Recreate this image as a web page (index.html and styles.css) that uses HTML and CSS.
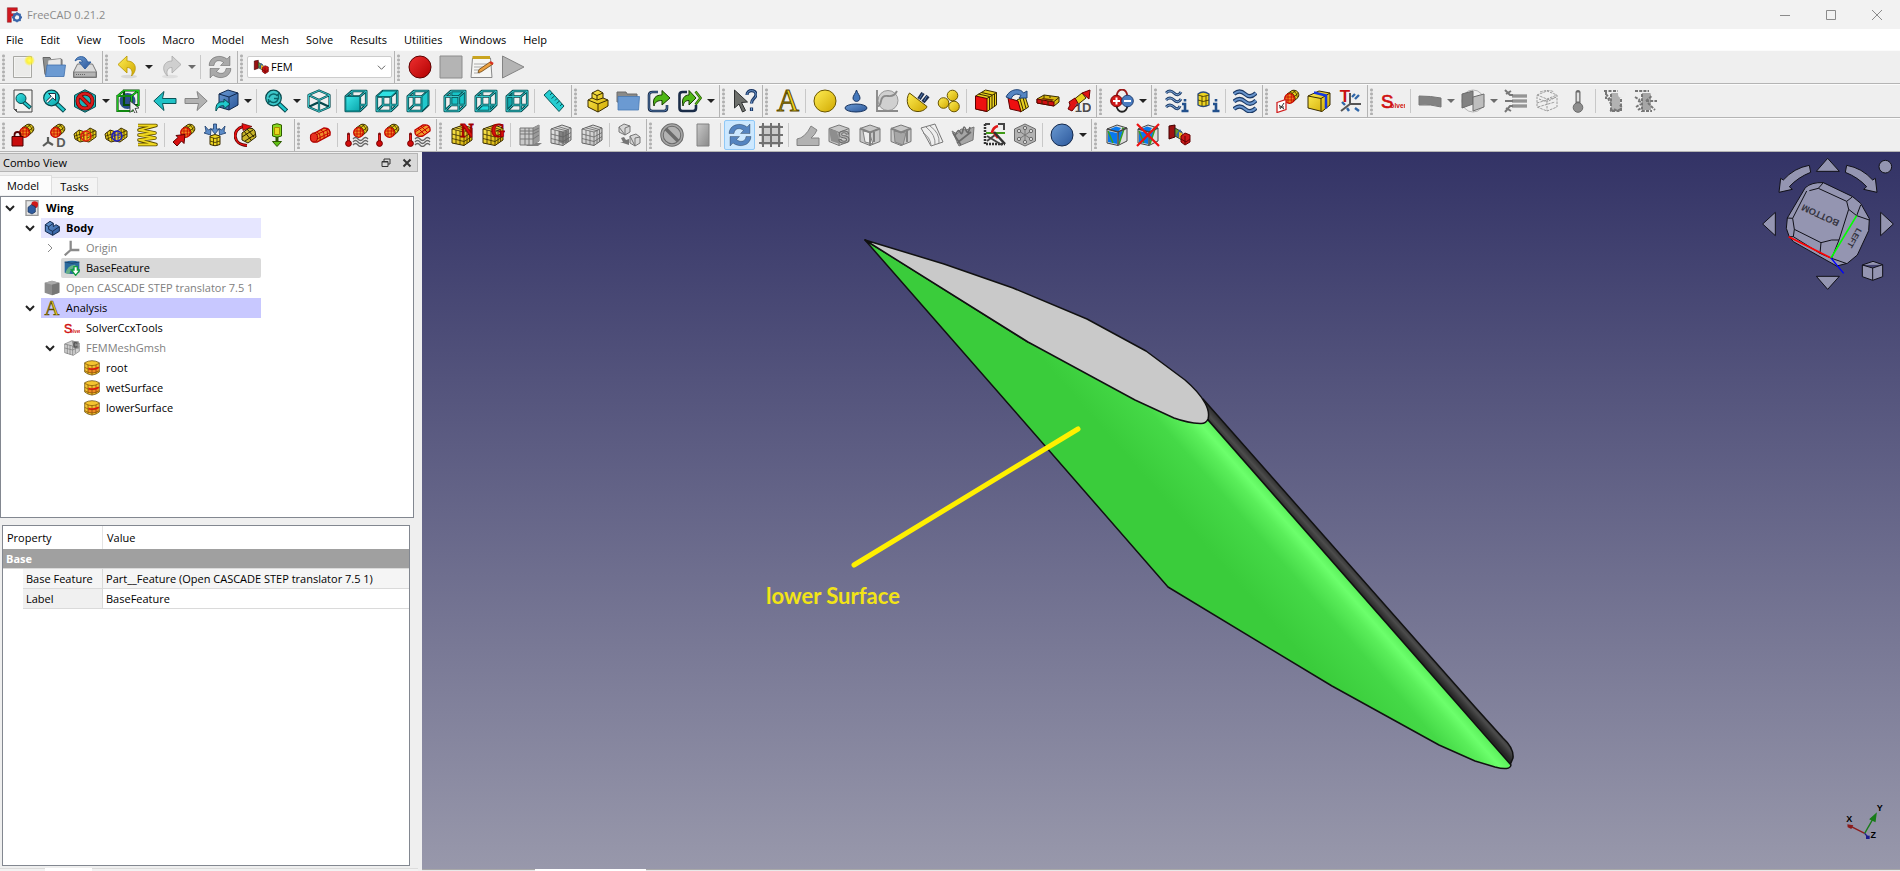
FILE: index.html
```html
<!DOCTYPE html>
<html lang="en">
<head>
<meta charset="utf-8">
<title>FreeCAD 0.21.2</title>
<link rel="stylesheet" href="styles.css">
</head>
<body>
<svg class="defs" aria-hidden="true">
<defs>
<linearGradient id="gy" x1="0" y1="0" x2="1" y2="1"><stop offset="0" stop-color="#ffee55"/><stop offset="1" stop-color="#d0a800"/></linearGradient>
<linearGradient id="gb" x1="0" y1="0" x2="1" y2="1"><stop offset="0" stop-color="#6a9ad2"/><stop offset="1" stop-color="#2b579b"/></linearGradient>
<linearGradient id="gg" x1="0" y1="0" x2="1" y2="1"><stop offset="0" stop-color="#b8b8b8"/><stop offset="1" stop-color="#606060"/></linearGradient>
<linearGradient id="gr" x1="0" y1="0" x2="1" y2="1"><stop offset="0" stop-color="#f03030"/><stop offset="1" stop-color="#b00000"/></linearGradient>
<linearGradient id="gt" x1="0" y1="0" x2="1" y2="1"><stop offset="0" stop-color="#3ce6e8"/><stop offset="1" stop-color="#0aa5aa"/></linearGradient>
<radialGradient id="glow"><stop offset="0" stop-color="#ffff60"/><stop offset=".5" stop-color="#fff02a" stop-opacity=".9"/><stop offset="1" stop-color="#fff200" stop-opacity="0"/></radialGradient>

<g id="wire" fill="none" stroke-linejoin="round">
  <path d="M1.800 7.500h14v14.500h-14zM8 2h14.200v14h-14.200zM1.800 7.500L8 2M15.800 7.500L22.200 2M15.800 22L22.200 16M1.800 22L8 16" stroke="#06484c" stroke-width="2.600"/>
  <path d="M1.800 7.500h14v14.500h-14zM8 2h14.200v14h-14.200zM1.800 7.500L8 2M15.800 7.500L22.200 2M15.800 22L22.200 16M1.800 22L8 16" stroke="#35c8cb" stroke-width="1"/>
</g>
<g id="tube">
  <path d="M11 5L16 1.500C21 0 24.500 5 22 8.500L17 13z" fill="#e8ce1c" stroke="#3a2c00"/>
  <path d="M14 3q5 2 5.500 8M17 1.500q4 2 4.500 7M13 6.500l7-5M16 9.500l6.500-5.500" fill="none" stroke="#3a2c00" stroke-width=".8"/>
  <circle cx="13.500" cy="9.500" r="4.800" fill="#f08a20" stroke="#c80000" stroke-width="1.300"/>
  <path d="M12 5v9M15.300 5v9M9 8h9M9 11h9" stroke="#c80000" stroke-width=".8"/>
</g>
<g id="box">
  <path d="M2 6L13 2l9 3v12l-8 5.500L2 20z" fill="url(#gy)" stroke="#3a2c00"/>
  <path d="M2 6l12 3 8-4M14 9v13.500M2 11l12 3 8-4.500M2 15.500l12 3 8-5M6 7v14M10 8v13.500M17 7.500v13M19.500 6.500v12.500M5.500 4.800l12 3M9 3.500l10 3" fill="none" stroke="#3a2c00" stroke-width=".8"/>
</g>
<g id="cube">
  <path d="M2 5.500L12 2l10 3.500v13L12 22.500 2 18.500z" fill="#b8b8b8" stroke="#444"/>
  <path d="M2 5.500l10 4 10-4M12 9.500v13" fill="none" stroke="#444"/>
</g>
<g id="thermo"><path d="M3.500 11v8" stroke="#801010" stroke-width="3" stroke-linecap="round"/><path d="M3.500 12v7" stroke="#f02020" stroke-width="1.400"/><circle cx="3.500" cy="20.500" r="2.900" fill="#d00c0c" stroke="#700"/></g>
<g id="waves" fill="none" stroke="#666" stroke-width="1.300"><path d="M8 16q2.500-3 5 0t5 0 5 0M8 19q2.500-3 5 0t5 0 5 0M8 22q2.500-3 5 0t5 0 5 0"/></g>
<g id="clip">
  <path d="M2 6L12 2l10 3v13l-9 4.500L2 20z" fill="#ddd" stroke="#444"/>
  <path d="M4 6.500l7-3 5 1.500-3 4zM3 8l9 2v11l-9-2z" fill="#0878ee"/>
  <path d="M13 9.500l5-2-4 13z" fill="#0878ee"/>
  <path d="M3 8l5 12M17 5l2 1-5 15" fill="none" stroke="#38a020" stroke-width="1.500"/>
  <path d="M2 6l11 3 9-4M13 9v13" fill="none" stroke="#444" stroke-width="1.500"/>
</g>
<g id="fem">
  <path d="M2 3l6-1v12l-6 2z" fill="#9c1212" stroke="#400"/><path d="M8 5l7 4v8l-7-4z" fill="#6a9e2c" stroke="#333"/><path d="M9 12l4-6 2 4-3 5z" fill="#3465a4"/><path d="M12 9l3 1v6l-3-1z" fill="#e8b820"/><path d="M14 13l4-3 5 2v7l-5 3-4-3z" fill="#cc1818" stroke="#600"/><path d="M14 16l5 3 4-3M18 13v8" fill="none" stroke="#600"/>
</g>

<symbol id="i-logo" viewBox="0 0 24 24"><path d="M2 1h15v5H8v4h6v4H8v9H2z" fill="#d01820" stroke="#70060a" stroke-width=".6"/><circle cx="16.500" cy="15.500" r="5" fill="none" stroke="#3a66aa" stroke-width="3.400"/><path d="M16.500 8v3M16.500 20v3M9 15.500h3M21 15.500h3M11.200 10.200l2 2M19.800 18.800l2 2M21.800 10.200l-2 2M13.200 18.800l-2 2" stroke="#3a66aa" stroke-width="2.400"/></symbol>
<symbol id="i-new" viewBox="0 0 24 24"><path d="M2.500 1.500h18v21h-18z" fill="#f4f4f2" stroke="#a8a8a4"/><path d="M4 3h15v18H4z" fill="#ebebe9"/><circle cx="18.500" cy="5.500" r="5.500" fill="url(#glow)"/></symbol>
<symbol id="i-open" viewBox="0 0 24 24"><path d="M1 2.500h7l1 2h11v15H3z" fill="#8e9090" stroke="#666"/><path d="M6 5l13-1.500V14H5z" fill="#e8e8e8" stroke="#888" stroke-width=".8"/><path d="M5 10h18.500L22 21.500H3.500z" fill="#6b9ad2" stroke="#4070ac" stroke-width=".8"/></symbol>
<symbol id="i-save" viewBox="0 0 24 24"><path d="M4.500 9h15l4 8v5.500H.5V17z" fill="#dadada" stroke="#777"/><path d="M1 17h22v5H1z" fill="#b4b4b4" stroke="#777" stroke-width=".8"/><path d="M3 19.500h9" stroke="#666" stroke-dasharray="1 1"/><path d="M2 6C4 0 13 0 14.500 7H18l-6 7-6-7h3.500C9 4 5 3.500 2 6z" fill="url(#gb)" stroke="#31609f"/></symbol>
<symbol id="i-undo" viewBox="0 0 24 24"><ellipse cx="13" cy="21.500" rx="8" ry="1.800" fill="#d8d8d8"/><path d="M2 9.500L11 1v5c9 0 11 9 4.500 15 1.500-5 0-8.500-4.500-8.500V18z" fill="url(#gy)" stroke="#b89400" stroke-width=".8"/></symbol>
<symbol id="i-redo" viewBox="0 0 24 24"><ellipse cx="11" cy="21.500" rx="8" ry="1.800" fill="#dedede"/><path d="M22 9.500L13 1v5C4 6 2 15 8.500 21 7 16 8.500 12.500 13 12.500V18z" fill="#cfcfcf" stroke="#a8a8a8" stroke-width=".8"/></symbol>
<symbol id="i-sync" viewBox="0 0 24 24"><path d="M1 10.500C1.500 1 13 -1 19 4l3-3v9.500h-9.500l3-3C12 4.500 6.500 5 6 10.500z" fill="currentColor" stroke="#00000055" stroke-width=".8"/><path d="M23 13.500C22.500 23 11 25 5 20l-3 3v-9.500h9.500l-3 3C12 19.500 17.500 19 18 13.500z" fill="currentColor" stroke="#00000055" stroke-width=".8"/></symbol>
<symbol id="i-rec" viewBox="0 0 24 24"><circle cx="12" cy="12" r="11" fill="url(#gr)" stroke="#5c0000"/></symbol>
<symbol id="i-stop" viewBox="0 0 24 24"><path d="M1 1h22v22H1z" fill="#b4b4b4" stroke="#8c8c8c"/></symbol>
<symbol id="i-note" viewBox="0 0 24 24"><path d="M2.500 3h18l1.500 19.500H1z" fill="#f6f6f4" stroke="#888"/><path d="M2.500 1h17.500v3H2.500z" fill="#c9a420"/><path d="M4 9h13M4 12h11M4 15h9M4 18h6" stroke="#aaa"/><path d="M8 17.500l1-3L20 7l3 2-12 8z" fill="#eba040" stroke="#6a4210" stroke-width=".8"/><path d="M20 7l3 2" stroke="#d83020" stroke-width="2.500"/></symbol>
<symbol id="i-play" viewBox="0 0 24 24"><path d="M1.500 1v22L23 12z" fill="#b4b4b4" stroke="#848484"/></symbol>

<symbol id="i-fit" viewBox="0 0 24 24"><path d="M3 1h18v22H6l-3-3z" fill="#f2f2f0" stroke="#444"/><path d="M3 20h3v3z" fill="#555"/><path d="M12.500 13l7 6" stroke="#06484c" stroke-width="4"/><path d="M13 13.500l6 5" stroke="#20c8cc" stroke-width="2"/><circle cx="10" cy="9.500" r="5" fill="url(#gt)" stroke="#06484c"/></symbol>
<symbol id="i-fitsel" viewBox="0 0 24 24"><path d="M14 14l8.500 8" stroke="#06484c" stroke-width="4.500"/><path d="M14 14l8 7.500" stroke="#20c8cc" stroke-width="2.400"/><circle cx="9.500" cy="9" r="7.800" fill="url(#gt)" stroke="#06484c" stroke-width="1.200"/><path d="M5 13l6-6" stroke="#234" stroke-width="3"/><path d="M6.500 4.500h7v7z" fill="#fff" stroke="#234"/><path d="M5 13l6-6" stroke="#fff" stroke-width="1.400"/></symbol>
<symbol id="i-draw" viewBox="0 0 24 24"><path d="M12 .8l10.500 5.500v11.400L12 23.200 1.500 17.700V6.300z" fill="#18b4b8" stroke="#06484c"/><circle cx="12" cy="12" r="7.500" fill="none" stroke="#600" stroke-width="4"/><path d="M7 7l10 10" stroke="#600" stroke-width="4"/><circle cx="12" cy="12" r="7.500" fill="none" stroke="#d81c1c" stroke-width="2.500"/><path d="M7 7l10 10" stroke="#d81c1c" stroke-width="2.500"/></symbol>
<symbol id="i-bbox" viewBox="0 0 24 24"><circle cx="11.500" cy="12" r="8" fill="#2c4f8c"/><path d="M1.500 7h14v15h-14zM8 1.500h14.500V16H8zM1.500 7L8 1.500M15.500 7l7-5.500M15.500 22l7-6" fill="none" stroke="#064d06" stroke-width="2.200"/><path d="M1.500 7h14v15h-14zM8 1.500h14.500V16M1.500 7L8 1.500h14M15.500 7l7-5.500M15.500 22l7-6" fill="none" stroke="#1cc41c" stroke-width="1.100"/><path d="M14 12l9 7-4 .5 2 4-2 1-2-4-3 3z" fill="#eee" stroke="#333" stroke-width=".8"/></symbol>
<symbol id="i-left" viewBox="0 0 24 24"><path d="M.8 12L11 2.500 9.500 9.500H23v5H9.500l1.500 7z" fill="#20c2c6" stroke="#0a5558"/></symbol>
<symbol id="i-right" viewBox="0 0 24 24"><path d="M23.200 12L13 2.500l1.500 7H1v5h13.500l-1.500 7z" fill="#b2b2b2" stroke="#858585"/></symbol>
<symbol id="i-link" viewBox="0 0 24 24"><path d="M4 5l9-4 10 3v12l-9 5-10-3z" fill="url(#gb)" stroke="#10284c"/><path d="M4 5l10 3 9-4M14 8v13" fill="none" stroke="#10284c"/><path d="M1 22c-1-8 4-10 8-9v-3l6 5-6 5v-3c-3-1-6 1-8 5z" fill="#20c8cc" stroke="#06484c"/></symbol>
<symbol id="i-zoom" viewBox="0 0 24 24"><path d="M14 14l8.500 8" stroke="#06484c" stroke-width="4.500"/><path d="M14 14l8 7.500" stroke="#20c8cc" stroke-width="2.400"/><circle cx="9.500" cy="9" r="7.800" fill="#3cc8ca" stroke="#06484c" stroke-width="1.200"/><path d="M5 8.500c1-4 6-4.500 8-2l1.500-1.500v4.500H10M14 10c-1 4-6 4.500-8 2L4.500 13.500V10" fill="none" stroke="#0a6468" stroke-width="1.400"/></symbol>
<symbol id="i-iso" viewBox="0 0 24 24"><g fill="none" stroke-linejoin="round"><path d="M12 1.500L22.500 6v12L12 22.500 1.500 18V6zM1.500 6L12 11l10.500-5M12 11v11.500M1.500 18L12 13l10.500 5" stroke="#06484c" stroke-width="2.200"/><path d="M12 1.500L22.500 6v12L12 22.500 1.500 18V6zM1.500 6L12 11l10.500-5M12 11v11.500" stroke="#40cccf" stroke-width=".9"/></g></symbol>
<symbol id="i-front" viewBox="0 0 24 24"><use href="#wire"/><path d="M1.800 7.500h14v14.500h-14z" fill="url(#gt)" stroke="#06686c"/></symbol>
<symbol id="i-top" viewBox="0 0 24 24"><use href="#wire"/><path d="M2 7.500L8 2h14l-6 5.500z" fill="#2ee0e2" stroke="#06686c"/></symbol>
<symbol id="i-rightv" viewBox="0 0 24 24"><use href="#wire"/><path d="M16 7.500L22 2v14l-6 6z" fill="#20c8cc" stroke="#06686c"/></symbol>
<symbol id="i-rear" viewBox="0 0 24 24"><path d="M8 3h14v13H8z" fill="#18c4c8"/><use href="#wire"/></symbol>
<symbol id="i-bottom" viewBox="0 0 24 24"><path d="M2 22l6-6h14l-6 6z" fill="#20d8dc"/><use href="#wire"/></symbol>
<symbol id="i-leftv" viewBox="0 0 24 24"><path d="M2 7.500L8 2v14l-6 6z" fill="#10a8ac"/><use href="#wire"/></symbol>
<symbol id="i-ruler" viewBox="0 0 24 24"><path d="M2 6l5.500-5L22 17l-5 5.500z" fill="#25cdd1" stroke="#0a5558"/><path d="M10 4l-2 2M12.500 7l-3 2.500M15 9.500l-2 2M17.500 12l-3 2.500M20 15l-2 2" stroke="#0a5558"/></symbol>
<symbol id="i-part" viewBox="0 0 24 24"><path d="M3 11l4-2V4l6-3 5 3v5l5 2v6l-10 6-10-5z" fill="url(#gy)" stroke="#3a2c00"/><path d="M3 11l10 4 10-4M7 4l5 2.500L18 4M12 6.500V11l6-2M13 15v8M7 9l5 2" fill="none" stroke="#3a2c00"/></symbol>
<symbol id="i-folder" viewBox="0 0 24 24"><path d="M1 3h9l1 2h10v8H1z" fill="#8a8a88" stroke="#6a6a6a"/><path d="M2 7.500h21.500L22.500 21H2z" fill="#6b9ad2" stroke="#4878b4" stroke-width=".8"/></symbol>
<symbol id="i-export" viewBox="0 0 24 24"><path d="M11 3H5.500Q2 3 2 6v13q0 3 3.500 3H17q3 0 3-3v-3" fill="none" stroke="#1a2c48" stroke-width="2.600"/><path d="M11 3H5.500Q2 3 2 6v13q0 3 3.500 3H17q3 0 3-3v-3" fill="none" stroke="#5b88c0" stroke-width=".8"/><path d="M7 17c-2-8 2-11 8-11V1.500L23 9l-8 7v-4.500c-4 0-7 1-8 5.500z" fill="#4eb814" stroke="#173c00"/></symbol>
<symbol id="i-export2" viewBox="0 0 24 24"><path d="M9 3H4.500Q1.500 3 1.500 6v13q0 3 3 3H15q3 0 3-3v-3" fill="none" stroke="#1a2c48" stroke-width="2.600"/><path d="M5 17c-2-8 2-11 6-11V1.500L18 9l-7 7v-4.500c-3 0-5 1-6 5.500z" fill="#4eb814" stroke="#173c00"/><path d="M17.500 2.500l5 6.500-5 6.500" fill="none" stroke="#2c6a06" stroke-width="2.600"/><path d="M17.500 2.500l5 6.500-5 6.500" fill="none" stroke="#6ccc20"/></symbol>
<symbol id="i-what" viewBox="0 0 24 24"><path d="M1.500 1l13 12-6 .5 4 8-3 1.500-3.500-8-4.500 4z" fill="#6e706c" stroke="#2e3030"/><path d="M14 6c0-6 9-5.500 9-.500 0 4-4.500 4-4.500 9M18.500 18.500v3.500" fill="none" stroke="#1c3764" stroke-width="3.200"/><path d="M14 6c0-6 9-5.500 9-.500 0 4-4.500 4-4.500 9M18.500 19v2.500" fill="none" stroke="#6f9cd0"/></symbol>
<symbol id="i-a" viewBox="0 0 24 24"><text class="glyph-a" x="12" y="22">A</text></symbol>
<symbol id="i-ball" viewBox="0 0 24 24"><circle cx="12" cy="12" r="11" fill="url(#gy)" stroke="#6a5600"/></symbol>
<symbol id="i-drop" viewBox="0 0 24 24"><path d="M12.500 1c1 3.500 3.500 5.500 3.500 8 0 4.500-7 4.500-7 0 0-2.500 2.500-4.500 3.500-8z" fill="#4478bc" stroke="#16325e"/><ellipse cx="12" cy="19" rx="11" ry="4" fill="url(#gb)" stroke="#16325e"/></symbol>
<symbol id="i-curve" viewBox="0 0 24 24"><circle cx="13" cy="11.500" r="10" fill="#d0d0d0" stroke="#999"/><path d="M2 1v21h21M2 17q3 1 4-5t7-5 9-5" fill="none" stroke="#8a8a8a" stroke-width="1.900"/></symbol>
<symbol id="i-plug" viewBox="0 0 24 24"><path d="M3.500 4C-1 10 1 22 11 22.500c6 .5 10-3.500 10-5z" fill="url(#gy)" stroke="#5c4a00"/><path d="M13 10l4-6M17 13l5-6" stroke="#1c2c4c" stroke-width="4"/><path d="M13.500 9.500l3-5M18 12l3-5" stroke="#5580b8"/></symbol>
<symbol id="i-balls" viewBox="0 0 24 24"><g fill="url(#gy)" stroke="#6a5600"><circle cx="15.500" cy="6.500" r="5.300"/><circle cx="6.500" cy="14" r="5.300"/><circle cx="17" cy="17.500" r="5.300"/></g></symbol>
<symbol id="i-redbox" viewBox="0 0 24 24"><path d="M1.500 7l10-6 11 2.500V16L13 22.500 1.500 20z" fill="#e8d020" stroke="#3a2c00"/><path d="M1.500 7L13 9.500v13L1.500 20z" fill="#ee1010" stroke="#5c0000"/><path d="M13 9.500l9.500-6M15.500 8v13M18 6.500v13M20.500 5v12.500M4.500 5l11 2.500M7.500 3.500l11 2.500" fill="none" stroke="#3a2c00"/></symbol>
<symbol id="i-rotbox" viewBox="0 0 24 24"><path d="M12 11l8-4 3.500 11-8 5z" fill="#e8d020" stroke="#3a2c00"/><path d="M15 10l3.500 12M18 8.500l3 11" stroke="#3a2c00"/><path d="M3 9l10 3 3 10.500L5 20z" fill="#ee1010" stroke="#5c0000"/><path d="M1 8C5-1 16-1 18.500 4L22 2v7h-8l2-2.500C12 4 8 5 6 10z" fill="#5585c2" stroke="#1f4478"/></symbol>
<symbol id="i-flat" viewBox="0 0 24 24"><path d="M1 10l7-4 15 2v5l-5 4L1 14z" fill="#d8b810" stroke="#3a2c00"/><path d="M7 9l11 1.500-2 1.500-11-2z" fill="#6a3000"/><path d="M1 10l17 3v4L1 14z" fill="#d01010" stroke="#5c0000"/><path d="M6 11v4M12 12v4M18 12.500l5-4M8 6v3M14 7v2" fill="none" stroke="#3a2c00"/></symbol>
<symbol id="i-1d" viewBox="0 0 24 24"><path d="M5 12L15 4l4 5-10 8z" fill="#e8d020" stroke="#3a2c00"/><path d="M15 4l8-3-1 9zM2 13l6-4 4 7-3 1-4 5-4-2 2-4z" fill="#e01414" stroke="#6a0000"/><text class="glyph-1d" x="16" y="23">1D</text></symbol>
<symbol id="i-plusminus" viewBox="0 0 24 24"><path d="M6.500 8C7-2 17-2 17.500 8" fill="none" stroke="#9a1a1a" stroke-width="2"/><path d="M6.500 16c.500 9 10.500 9 11 0" fill="none" stroke="#222" stroke-width="2"/><circle cx="6.500" cy="12" r="5.800" fill="#d01818" stroke="#700"/><circle cx="17.500" cy="12" r="5.800" fill="#4a7cc0" stroke="#1c3c70"/><path d="M3 12h7M6.500 8.500v7M14 12h7" stroke="#fff" stroke-width="2"/></symbol>
<symbol id="i-flowi" viewBox="0 0 24 24"><g fill="none" stroke="#22406c" stroke-width="3"><path d="M1 4q4-4 8 0t7-1M1 11q4-4 8 0t7-1M1 18q4-4 8 0t6-1"/></g><g fill="none" stroke="#7aa4d4"><path d="M1 4q4-4 8 0t7-1M1 11q4-4 8 0t7-1M1 18q4-4 8 0t6-1"/></g><path d="M17 15h3v7m-3.500 0h7M20 10v2.500" fill="none" stroke="#22508c" stroke-width="2.600"/></symbol>
<symbol id="i-meshi" viewBox="0 0 24 24"><path d="M2 5q5-4 11 0v11q-6 3-11 0z" fill="#ecd420" stroke="#2a4a7c" stroke-width="1.300"/><path d="M2 6q5 3 11 0M2 11q5 3 11 0M6 7v10M10 7v10" fill="none" stroke="#3a2c00" stroke-width=".8"/><path d="M17 15h3v7m-3.500 0h7M20 10v2.500" fill="none" stroke="#22508c" stroke-width="2.600"/></symbol>
<symbol id="i-flow" viewBox="0 0 24 24"><g fill="none" stroke="#1c3a66" stroke-width="4.200"><path d="M1 5q5.500-5 11 0t11-1M1 12.500q5.500-5 11 0t11-1M1 20q5.500-5 11 0t11-1"/></g><g fill="none" stroke="#6894cc" stroke-width="2"><path d="M1 5q5.500-5 11 0t11-1M1 12.500q5.500-5 11 0t11-1M1 20q5.500-5 11 0t11-1"/></g></symbol>
<symbol id="i-section" viewBox="0 0 24 24"><use href="#tube"/><path d="M1 13.500l9-3v10l-9 3z" fill="#fff" stroke="#d02020" stroke-width="1.300"/><path d="M3 16l5 4M8 14l-4 6M3 18h5" stroke="#333"/></symbol>
<symbol id="i-strap" viewBox="0 0 24 24"><path d="M1 7l11-5 11 2v12l-8 6.500L1 19z" fill="url(#gy)" stroke="#3a2c00"/><path d="M1 7l13 2.500L23 4M14 9.500v13" fill="none" stroke="#3a2c00"/><path d="M7 3.500l12 3v13" fill="none" stroke="#1538e0" stroke-width="2.500"/></symbol>
<symbol id="i-axes" viewBox="0 0 24 24"><path d="M12 4v11L3 22M12 15h11" fill="none" stroke="#555" stroke-width="2"/><path d="M4 13l3 3M17 10l4-4M17 19l4 3M14 8l3-3M9 19l2 3" stroke="#2f66a8" stroke-width="2.400"/><text class="glyph-t" x="7" y="13">T</text></symbol>
<symbol id="i-solver" viewBox="0 0 36 36"><text class="glyph-s" x="0" y="29">S</text><text class="glyph-olver" x="14" y="29">olver</text></symbol>
<symbol id="i-beam" viewBox="0 0 24 24"><path d="M1 7q12 0 22 2v9q-10-3-22-2z" fill="#555" stroke="#444"/></symbol>
<symbol id="i-shell" viewBox="0 0 24 24"><circle cx="12" cy="12" r="11" fill="none" stroke="#888" stroke-width=".8"/><path d="M1 5l11-3v13l-11 4z" fill="#555" stroke="#333"/><path d="M12 8l11-3v13l-11 4z" fill="#aaa" stroke="#333"/></symbol>
<symbol id="i-pipes" viewBox="0 0 24 24"><path d="M8 7h15M8 12h15M8 17h15" stroke="#444" stroke-width="3"/><path d="M8 7h15M8 12h15M8 17h15" stroke="#999"/><path d="M1 1l5 5h3M7 2l-5 3M1 12h8M1 23l5-6h3M7 22l-5-3" fill="none" stroke="#444" stroke-width="2"/></symbol>
<symbol id="i-sketch" viewBox="0 0 24 24"><path d="M2 6l10-4 10 4v12l-10 4-10-4zM2 6l10 4 10-4M12 10v12M2 14l20-6M3 18l17-5M5 3q9-3 14 0M4 10l8 3 9-5" fill="none" stroke="#777" stroke-dasharray="2.500 1"/></symbol>
<symbol id="i-thermo" viewBox="0 0 24 24"><path d="M12 3.500v13" stroke="#333" stroke-width="5" stroke-linecap="round"/><path d="M12 3.500v9" stroke="#ddd" stroke-width="2.500"/><circle cx="12" cy="18.500" r="4.800" fill="#666" stroke="#333"/></symbol>
<symbol id="i-wet" viewBox="0 0 24 24"><path d="M8 4h9v17H8z" fill="#999"/><path d="M1 2h14M3 3v7M8 5v17h10V8M5 9l3 6M7 22l4-2 3 2 4-2M3 5l4 5M17 16l2 3" fill="none" stroke="#444" stroke-width="2" stroke-dasharray="3 1.500"/><circle cx="19" cy="5" r="4" fill="#eee"/></symbol>
<symbol id="i-sun" viewBox="0 0 24 24"><path d="M8 4h9v17H8z" fill="#888"/><path d="M1 2h14M1 8l5 3M2 18l5-3M12 12l9-8M12 12h11M14 14l7 7M8 5v17h10M4 21l3-2M4 12l4 1" fill="none" stroke="#444" stroke-width="2" stroke-dasharray="3 1.200"/><circle cx="20" cy="4" r="3.500" fill="#eee"/></symbol>

<symbol id="i-lock" viewBox="0 0 24 24"><use href="#tube"/><path d="M3.500 14v-2q0-3 3-3t3 3v2" fill="none" stroke="#5a0000" stroke-width="1.800"/><path d="M1 13.500h11v9.500H1z" fill="#c80c0c" stroke="#4a0000"/></symbol>
<symbol id="i-ad" viewBox="0 0 24 24"><use href="#tube"/><path d="M6 14v5l-5 4M6 19l5 3" fill="none" stroke="#5a5c5a" stroke-width="2.200"/><text class="glyph-d" x="19" y="24">D</text></symbol>
<symbol id="i-contact" viewBox="0 0 24 24"><path d="M1 11l5-4 6 2 5-4 6 3v6l-7 5-5-1-4 1-5-3z" fill="#e8ce1c" stroke="#3a2c00"/><path d="M3 9l2 9M6 7l2 11M10 8l1 10M17 6l1 11M20 7v8M2 13l9-3M3 16l9-4M14 11l8-3M14 15l9-4" stroke="#3a2c00" stroke-width=".8"/><circle cx="13" cy="13" r="5" fill="none" stroke="currentColor" stroke-width="1.500"/><path d="M11 9v8M14 9v8M9 12h8" stroke="currentColor"/></symbol>
<symbol id="i-spring" viewBox="0 0 24 24"><g fill="none" stroke-linejoin="round"><path d="M3 2.500h18L4 7l16 3L4 12l16 3L4 17l17 4.500H3" stroke="#5a4a00" stroke-width="3.600"/><path d="M3 2.500h18L4 7l16 3L4 12l16 3L4 17l17 4.500H3" stroke="#f0d820" stroke-width="1.800"/></g></symbol>
<symbol id="i-force" viewBox="0 0 24 24"><use href="#tube"/><path d="M4 12.500l9-1-1 9-2.500-2.500L5 23l-4-4 5-4.500z" fill="#d81010" stroke="#5c0000"/></symbol>
<symbol id="i-pressure" viewBox="0 0 24 24"><path d="M7 13q5-3 10 0v8.500q-5 2.500-10 0z" fill="#ecd420" stroke="#3a2c00"/><path d="M7 14q5 3 10 0M7 18q5 3 10 0M10.500 15v8M14 15v8" fill="none" stroke="#3a2c00" stroke-width=".8"/><path d="M10.500 1h3v5H16l-4 5-4-5h2.500zM2 3l3.500 4L8 5.500 7.500 12 1 10l2-1.500zM22 3l-3.500 4L16 5.500l.5 6.500L23 10l-2-1.500z" fill="#5c8cc8" stroke="#1c3c6c" stroke-width=".8"/></symbol>
<symbol id="i-centrif" viewBox="0 0 24 24"><path d="M8 10l7-5q5 0 6 3l1 6-8 6-6-3z" fill="#c8b428" stroke="#2c2400"/><path d="M10 8l7 9M13 6l7 8M8 14l11-7M11 18l11-7" stroke="#2c2400"/><path d="M13 22.500C-2 22-2 6 9 3.500" fill="none" stroke="#5c0000" stroke-width="3"/><path d="M13 22.500C-2 22-2 6 9 3.500" fill="none" stroke="#e81010" stroke-width="1.700"/><path d="M8 .5l10 3-9 4z" fill="#e81010" stroke="#5c0000" stroke-width=".7"/></symbol>
<symbol id="i-gravity" viewBox="0 0 24 24"><path d="M7.500 2q4.500-2.500 9 0v11q-4.500 2.500-9 0z" fill="#8ad820" stroke="#2e5a00"/><path d="M9.500 4.500h5v7h-5z" fill="#e8d820" stroke="#a88a00"/><path d="M12 14v6" stroke="#2e5a00" stroke-width="3"/><path d="M7.500 18.500h9L12 23.500z" fill="#60c014" stroke="#2e5a00"/></symbol>
<symbol id="i-rod" viewBox="0 0 24 24"><path d="M3 12L16 5q7 0 6 7L9 19q-8 1-6-7z" fill="#f08a2c" stroke="#b80000" stroke-width="1.400"/><path d="M9 9q4 2 3 8.500M13 7q4 2 3 8.500M17 5q3 2 2.500 8.500M3 14l18-8M5 18l16-8" fill="none" stroke="#c80000"/><ellipse cx="6" cy="14.500" rx="3.500" ry="4.500" fill="#e83020" stroke="#a00000"/></symbol>
<symbol id="i-heat" viewBox="0 0 24 24"><use href="#tube"/><use href="#thermo"/><use href="#waves"/></symbol>
<symbol id="i-temp" viewBox="0 0 24 24"><use href="#tube"/><use href="#thermo"/></symbol>
<symbol id="i-rodheat" viewBox="0 0 24 24"><path d="M8 7l8-5q8-1 7 6l-7 5q-9 2-8-6z" fill="#f09a2c" stroke="#c00000" stroke-width="1.300"/><path d="M11 5l7 7M14 3l7 7M10 12l12-8M8 9l11-7" stroke="#c80000"/><use href="#thermo"/><use href="#waves"/></symbol>
<symbol id="i-n" viewBox="0 0 24 24"><use href="#box"/><text class="glyph-mesh" x="17" y="14">N</text></symbol>
<symbol id="i-g" viewBox="0 0 24 24"><use href="#box"/><text class="glyph-mesh" x="17" y="14">G</text></symbol>
<symbol id="i-box" viewBox="0 0 24 24"><use href="#box"/></symbol>
<symbol id="i-layer" viewBox="0 0 24 24"><path d="M12 20l12 0-4 3H8z" fill="#555"/><path d="M2 5h13l6-3v16l-6 4H2z" fill="#bbb" stroke="#444"/><path d="M15 5l6-3v16l-6 4z" fill="#777"/><path d="M2 8h13l6-3M2 11h13l6-3M2 16h13l6-4M7 5v17M11 5v17M15 5v17" stroke="#444" fill="none"/></symbol>
<symbol id="i-region" viewBox="0 0 24 24"><use href="#box"/><path d="M10 8l5 1 4-2v12l-5 2-4-2z" fill="#222" opacity=".7"/></symbol>
<symbol id="i-convert" viewBox="0 0 24 24"><path d="M2 4l5-3 6 2v6l-5 3-6-3zM13 13l6-2 4 3v6l-5 3-5-3zM2 4l6 8M8 5v7M8 5l5-2M13 13l5 10M18 15v8M23 14l-5 1" fill="#ccc" stroke="#444"/><path d="M4 15l2 4H3l9 3 0-6-3 1-2-3z" fill="#444"/></symbol>
<symbol id="i-no" viewBox="0 0 24 24"><path d="M12 1l10.500 5v12L12 23 1.500 18V6z" fill="#999"/><circle cx="12" cy="12" r="10" fill="none" stroke="#333" stroke-width="3.500"/><path d="M5 5l14 14" stroke="#333" stroke-width="3.500"/><circle cx="12" cy="12" r="10" fill="none" stroke="#888" stroke-width="1.500"/></symbol>
<symbol id="i-bar" viewBox="0 0 24 24"><path d="M6 1h12v22H6z" fill="url(#gg)" stroke="#555"/></symbol>
<symbol id="i-grid" viewBox="0 0 24 24"><path d="M2 2h20v20H2z" fill="#bbb"/><path d="M0 4h24M0 12h24M0 20h24M4 0v24M12 0v24M20 0v24" stroke="#3c3c3c" stroke-width="2"/></symbol>
<symbol id="i-bend" viewBox="0 0 24 24"><path d="M1 22.500V16q8-1 14-13l6 4q-2 5-6 8h8v7.500z" fill="#999" stroke="#555"/></symbol>
<symbol id="i-cs" viewBox="0 0 24 24"><use href="#cube"/><path d="M2 6l8 2 3 13-9-3z" fill="#666"/><text class="glyph-cs" x="17" y="20">S</text></symbol>
<symbol id="i-cut" viewBox="0 0 24 24"><use href="#cube"/><path d="M5 8l6 1 4 12-8-2z" fill="#eee" stroke="#555"/><path d="M2 5.500l10 4 10-4M12 9.500v13M16 9v10" stroke="#555" stroke-width="2" fill="none"/></symbol>
<symbol id="i-cut2" viewBox="0 0 24 24"><use href="#cube"/><path d="M5 8l12 2-3 12-8-3z" fill="#888" stroke="#555"/><path d="M2 5.500l10 4 10-4M18 8v11" stroke="#555" stroke-width="2" fill="none"/></symbol>
<symbol id="i-sheet" viewBox="0 0 24 24"><path d="M1 5l14-4 8 18-12 4z" fill="#eee" stroke="#444"/><path d="M6 4q10 8 9 18M10 3q10 7 9 17M3 10q7 4 8 12" fill="none" stroke="#666"/></symbol>
<symbol id="i-hill" viewBox="0 0 24 24"><path d="M1 8l5 3 4-5 5 1 8-3-1 13-14 6z" fill="#888" stroke="#444"/><path d="M4 13q3-8 5-4t3-2 3 0 4-3M6 20L20 9M2 10l8 12" fill="none" stroke="#333" stroke-width="1.600"/></symbol>
<symbol id="i-plot" viewBox="0 0 24 24"><path d="M3 1v20h20" fill="none" stroke="#333" stroke-width="2.500" stroke-dasharray="2 1"/><path d="M3 1h5M16 1h6v6M5 13L20 22M5 18l8-6" stroke="#444" stroke-width="2" fill="none"/><path d="M4 10h19" stroke="#3f9a16" stroke-width="2"/><path d="M10 10q1-6 6-7M12 10l4 5" stroke="#e01818" stroke-width="2.600" fill="none"/><path d="M12 9l11 12" stroke="#333" stroke-width="2.500"/></symbol>
<symbol id="i-nodes" viewBox="0 0 24 24"><path d="M12 1l10.500 5v12L12 23 1.500 18V6z" fill="#999" stroke="#333"/><path d="M12 5v14M6 8l12 8M18 8L6 16" stroke="#444"/><g fill="#ccc" stroke="#333"><circle cx="12" cy="5" r="1.700"/><circle cx="12" cy="19" r="1.700"/><circle cx="6" cy="8" r="1.700"/><circle cx="18" cy="16" r="1.700"/><circle cx="18" cy="8" r="1.700"/><circle cx="6" cy="16" r="1.700"/></g></symbol>
<symbol id="i-blue" viewBox="0 0 24 24"><circle cx="12" cy="12" r="11" fill="url(#gb)" stroke="#14294c"/></symbol>
<symbol id="i-clip" viewBox="0 0 24 24"><use href="#clip"/></symbol>
<symbol id="i-clipx" viewBox="0 0 24 24"><use href="#clip"/><path d="M1 1l22 22M23 1L1 23" stroke="#f01010" stroke-width="2.200"/></symbol>
<symbol id="i-fem" viewBox="0 0 24 24"><use href="#fem"/></symbol>

<symbol id="i-doc" viewBox="0 0 24 24"><path d="M3 1h18v22H3z" fill="#e4e4e4" stroke="#999" stroke-width="2"/><circle cx="16" cy="7" r="5" fill="#d01818"/><path d="M6 11l5-4 6 3v8l-5 3-6-3z" fill="#2f5c9e" stroke="#142c50"/></symbol>
<symbol id="i-body" viewBox="0 0 24 24"><path d="M2 7l7-5 5 3v5l4-3 5 3v7l-10 6-11-6z" fill="url(#gb)" stroke="#10284c" stroke-width="1.500"/><path d="M2 7l5 3 7-5M7 10v4l6 3 10-7M13 17v6" fill="none" stroke="#10284c" stroke-width="1.400"/></symbol>
<symbol id="i-origin" viewBox="0 0 24 24"><path d="M10 1v14M10 15h13M10 15l-9 8" stroke="#8a8a8a" stroke-width="3.400" fill="none"/></symbol>
<symbol id="i-base" viewBox="0 0 24 24"><path d="M1 3q11-4 22 0v16q-11 4-22 0z" fill="#2a6a9e"/><path d="M1 3q11 4 22 0" stroke="#1c4670" fill="none" stroke-width="1.500"/><path d="M2 20Q5 8 16 7l3 3Q9 12 8 21z" fill="#68b088"/><path d="M15 10h5v5h4l-6.500 8-6.500-8h4z" fill="#fff" stroke="#10a040" stroke-width="2"/></symbol>
<symbol id="i-solid" viewBox="0 0 24 24"><path d="M1 4l11-3 11 3v15l-11 4-11-4z" fill="#8d8d8d"/><path d="M1 4l11 3 11-3-11-3z" fill="#ababab"/><path d="M12 7v16l11-4V4z" fill="#777"/></symbol>
<symbol id="i-gmesh" viewBox="0 0 24 24"><path d="M1 6l11-5 11 4v12l-9 6-13-4z" fill="#d0d0d0" stroke="#777"/><path d="M1 6l12 3 10-4M13 9v14M1 12l12 3 10-5M5 7v14M9 8v14M17 7v13" fill="none" stroke="#777"/><path d="M12 2l10 0v11l-8-1z" fill="#888"/><path d="M20 5q-5-3-5 2t5 3" stroke="#555" stroke-width="2" fill="none"/></symbol>
<symbol id="i-group" viewBox="0 0 24 24"><path d="M1 4q11-6 22 0v14q-11 9-22 0z" fill="#f4c430" stroke="#5a4000"/><path d="M6 11q8 3 16-2v8q-8 5-16 1z" fill="#f08a28"/><path d="M1 5q11 7 22 0M1 11q11 7 22 0M1 16q11 7 22 0M6 7v14M12 8v15M18 7v14" fill="none" stroke="#7c4c00"/><path d="M7 13q7 2 15-2" stroke="#e01010" stroke-width="2" fill="none"/></symbol>
</defs>
</svg>

<header class="titlebar">
  <svg class="app-icon"><use href="#i-logo"/></svg>
  <h1>FreeCAD 0.21.2</h1>
  <div class="window-buttons">
    <button aria-label="Minimize"><svg viewBox="0 0 12 12"><path d="M1 6.500h10"/></svg></button>
    <button aria-label="Maximize"><svg viewBox="0 0 12 12"><path d="M1.500 1.500h9v9h-9z"/></svg></button>
    <button aria-label="Close"><svg viewBox="0 0 12 12"><path d="M1 1l10 10M11 1L1 11"/></svg></button>
  </div>
</header>

<nav class="menubar">
  <button>File</button><button>Edit</button><button>View</button><button>Tools</button><button>Macro</button><button>Model</button><button>Mesh</button><button>Solve</button><button>Results</button><button>Utilities</button><button>Windows</button><button>Help</button>
</nav>

<div class="toolrow">
  <div class="toolbar">
    <button class="tool" aria-label="New"><svg><use href="#i-new"/></svg></button>
    <button class="tool" aria-label="Open"><svg><use href="#i-open"/></svg></button>
    <button class="tool" aria-label="Save"><svg><use href="#i-save"/></svg></button>
  </div>
  <div class="toolbar">
    <button class="tool" aria-label="Undo"><svg><use href="#i-undo"/></svg></button><button class="drop" aria-label="Undo list"></button>
    <button class="tool" aria-label="Redo"><svg><use href="#i-redo"/></svg></button><button class="drop off" aria-label="Redo list"></button>
    <i class="sep"></i>
    <button class="tool grey" aria-label="Refresh"><svg><use href="#i-sync"/></svg></button>
  </div>
  <div class="toolbar">
    <div class="workbench"><svg><use href="#i-fem"/></svg><select aria-label="Workbench"><option>FEM</option></select><svg class="chev" viewBox="0 0 10 10"><path d="M1 3l4 4 4-4"/></svg></div>
  </div>
  <div class="toolbar last">
    <button class="tool" aria-label="Record macro"><svg><use href="#i-rec"/></svg></button>
    <button class="tool" aria-label="Stop macro"><svg><use href="#i-stop"/></svg></button>
    <button class="tool" aria-label="Macros"><svg><use href="#i-note"/></svg></button>
    <button class="tool" aria-label="Run macro"><svg><use href="#i-play"/></svg></button>
  </div>
</div>

<div class="toolrow">
  <div class="toolbar">
    <button class="tool" aria-label="Fit all"><svg><use href="#i-fit"/></svg></button>
    <button class="tool" aria-label="Fit selection"><svg><use href="#i-fitsel"/></svg></button>
    <button class="tool" aria-label="Draw style"><svg><use href="#i-draw"/></svg></button><button class="drop" aria-label="Draw styles"></button>
    <button class="tool" aria-label="Bounding box"><svg><use href="#i-bbox"/></svg></button>
    <i class="sep"></i>
    <button class="tool" aria-label="Back"><svg><use href="#i-left"/></svg></button>
    <button class="tool" aria-label="Forward"><svg><use href="#i-right"/></svg></button>
    <button class="tool" aria-label="Linked object"><svg><use href="#i-link"/></svg></button><button class="drop" aria-label="Link navigation"></button>
    <i class="sep"></i>
    <button class="tool" aria-label="Sync view"><svg><use href="#i-zoom"/></svg></button><button class="drop" aria-label="Sync options"></button>
    <button class="tool" aria-label="Isometric"><svg><use href="#i-iso"/></svg></button>
    <i class="sep"></i>
    <button class="tool" aria-label="Front"><svg><use href="#i-front"/></svg></button>
    <button class="tool" aria-label="Top"><svg><use href="#i-top"/></svg></button>
    <button class="tool" aria-label="Right"><svg><use href="#i-rightv"/></svg></button>
    <i class="sep"></i>
    <button class="tool" aria-label="Rear"><svg><use href="#i-rear"/></svg></button>
    <button class="tool" aria-label="Bottom"><svg><use href="#i-bottom"/></svg></button>
    <button class="tool" aria-label="Left"><svg><use href="#i-leftv"/></svg></button>
    <i class="sep"></i>
    <button class="tool" aria-label="Measure"><svg><use href="#i-ruler"/></svg></button>
  </div>
  <div class="toolbar">
    <button class="tool" aria-label="Create part"><svg><use href="#i-part"/></svg></button>
    <button class="tool" aria-label="Create group"><svg><use href="#i-folder"/></svg></button>
    <button class="tool" aria-label="Make link"><svg><use href="#i-export"/></svg></button>
    <button class="tool" aria-label="Link actions"><svg><use href="#i-export2"/></svg></button><button class="drop" aria-label="More link actions"></button>
  </div>
  <div class="toolbar"><button class="tool" aria-label="What's this"><svg><use href="#i-what"/></svg></button></div>
  <div class="toolbar">
    <button class="tool" aria-label="Analysis container"><svg><use href="#i-a"/></svg></button>
    <i class="sep"></i>
    <button class="tool" aria-label="Solid material"><svg><use href="#i-ball"/></svg></button>
    <button class="tool" aria-label="Fluid material"><svg><use href="#i-drop"/></svg></button>
    <button class="tool" aria-label="Nonlinear material"><svg><use href="#i-curve"/></svg></button>
    <button class="tool" aria-label="Reinforced material"><svg><use href="#i-plug"/></svg></button>
    <button class="tool" aria-label="Material editor"><svg><use href="#i-balls"/></svg></button>
    <i class="sep"></i>
    <button class="tool" aria-label="Beam cross section"><svg><use href="#i-redbox"/></svg></button>
    <button class="tool" aria-label="Beam rotation"><svg><use href="#i-rotbox"/></svg></button>
    <button class="tool" aria-label="Shell thickness"><svg><use href="#i-flat"/></svg></button>
    <button class="tool" aria-label="Fluid section 1D"><svg><use href="#i-1d"/></svg></button>
  </div>
  <div class="toolbar"><button class="tool" aria-label="Electrostatic"><svg><use href="#i-plusminus"/></svg></button><button class="drop" aria-label="Electromagnetic constraints"></button></div>
  <div class="toolbar">
    <button class="tool" aria-label="Initial flow velocity"><svg><use href="#i-flowi"/></svg></button>
    <button class="tool" aria-label="Initial pressure"><svg><use href="#i-meshi"/></svg></button>
    <i class="sep"></i>
    <button class="tool" aria-label="Flow velocity"><svg><use href="#i-flow"/></svg></button>
  </div>
  <div class="toolbar">
    <button class="tool" aria-label="Section print"><svg><use href="#i-section"/></svg></button>
    <button class="tool" aria-label="Plane rotation"><svg><use href="#i-strap"/></svg></button>
    <button class="tool" aria-label="Transform"><svg><use href="#i-axes"/></svg></button>
  </div>
  <div class="toolbar last">
    <button class="tool" aria-label="Solver"><svg><use href="#i-solver"/></svg></button>
    <i class="sep"></i>
    <button class="tool" disabled aria-label="Elasticity"><svg><use href="#i-beam"/></svg></button><button class="drop off" aria-label="Mechanical equations"></button>
    <button class="tool" disabled aria-label="Electrostatic equation"><svg><use href="#i-shell"/></svg></button><button class="drop off" aria-label="Electromagnetic equations"></button>
    <button class="tool" disabled aria-label="Flow"><svg><use href="#i-pipes"/></svg></button>
    <button class="tool" disabled aria-label="Flux"><svg><use href="#i-sketch"/></svg></button>
    <button class="tool" disabled aria-label="Heat"><svg><use href="#i-thermo"/></svg></button>
    <i class="sep"></i>
    <button class="tool" disabled aria-label="Solver control"><svg><use href="#i-wet"/></svg></button>
    <button class="tool" disabled aria-label="Run solver"><svg><use href="#i-sun"/></svg></button>
  </div>
</div>

<div class="toolrow">
  <div class="toolbar">
    <button class="tool" aria-label="Fixed"><svg><use href="#i-lock"/></svg></button>
    <button class="tool" aria-label="Displacement"><svg><use href="#i-ad"/></svg></button>
    <button class="tool red" aria-label="Contact"><svg><use href="#i-contact"/></svg></button>
    <button class="tool navy" aria-label="Tie"><svg><use href="#i-contact"/></svg></button>
    <button class="tool" aria-label="Spring"><svg><use href="#i-spring"/></svg></button>
    <i class="sep"></i>
    <button class="tool" aria-label="Force"><svg><use href="#i-force"/></svg></button>
    <button class="tool" aria-label="Pressure"><svg><use href="#i-pressure"/></svg></button>
    <button class="tool" aria-label="Centrifugal"><svg><use href="#i-centrif"/></svg></button>
    <button class="tool" aria-label="Self weight"><svg><use href="#i-gravity"/></svg></button>
  </div>
  <div class="toolbar">
    <button class="tool" aria-label="Initial temperature"><svg><use href="#i-rod"/></svg></button>
    <i class="sep"></i>
    <button class="tool" aria-label="Heat flux"><svg><use href="#i-heat"/></svg></button>
    <button class="tool" aria-label="Temperature"><svg><use href="#i-temp"/></svg></button>
    <button class="tool" aria-label="Body heat source"><svg><use href="#i-rodheat"/></svg></button>
  </div>
  <div class="toolbar">
    <button class="tool" aria-label="Netgen mesh"><svg><use href="#i-n"/></svg></button>
    <button class="tool" aria-label="Gmsh mesh"><svg><use href="#i-g"/></svg></button>
    <i class="sep"></i>
    <button class="tool" disabled aria-label="Boundary layer"><svg><use href="#i-layer"/></svg></button>
    <button class="tool" disabled aria-label="Mesh region"><svg><use href="#i-region"/></svg></button>
    <button class="tool" disabled aria-label="Mesh group"><svg><use href="#i-box"/></svg></button>
    <i class="sep"></i>
    <button class="tool" disabled aria-label="Mesh to mesh"><svg><use href="#i-convert"/></svg></button>
  </div>
  <div class="toolbar">
    <button class="tool" disabled aria-label="Purge results"><svg><use href="#i-no"/></svg></button>
    <button class="tool" disabled aria-label="Show result"><svg><use href="#i-bar"/></svg></button>
    <i class="sep"></i>
    <button class="tool active" aria-label="Apply changes"><svg><use href="#i-sync"/></svg></button>
    <button class="tool" disabled aria-label="Pipeline"><svg><use href="#i-grid"/></svg></button>
    <i class="sep"></i>
    <button class="tool" disabled aria-label="Warp filter"><svg><use href="#i-bend"/></svg></button>
    <button class="tool" disabled aria-label="Scalar clip"><svg><use href="#i-cs"/></svg></button>
    <button class="tool" disabled aria-label="Cut filter"><svg><use href="#i-cut"/></svg></button>
    <button class="tool" disabled aria-label="Region clip"><svg><use href="#i-cut2"/></svg></button>
    <button class="tool" disabled aria-label="Contours"><svg><use href="#i-sheet"/></svg></button>
    <button class="tool" disabled aria-label="Line clip"><svg><use href="#i-hill"/></svg></button>
    <button class="tool" aria-label="Linearized stresses"><svg><use href="#i-plot"/></svg></button>
    <button class="tool" disabled aria-label="Data at point"><svg><use href="#i-nodes"/></svg></button>
    <i class="sep"></i>
    <button class="tool" aria-label="Filter functions"><svg><use href="#i-blue"/></svg></button><button class="drop" aria-label="More functions"></button>
  </div>
  <div class="toolbar last">
    <button class="tool" aria-label="Clipping plane"><svg><use href="#i-clip"/></svg></button>
    <button class="tool" aria-label="Remove clipping planes"><svg><use href="#i-clipx"/></svg></button>
    <button class="tool" aria-label="FEM examples"><svg><use href="#i-fem"/></svg></button>
  </div>
</div>

<main class="workspace">
  <aside class="combo">
    <div class="dock-title"><h2>Combo View</h2>
      <button aria-label="Float"><svg viewBox="0 0 10 10"><path d="M3 3V1h6v5H7M1 3.500h6v5H1zM1 4h6"/></svg></button>
      <button aria-label="Close panel"><svg viewBox="0 0 10 10"><path d="M1.500 1.500l7 7M8.500 1.500l-7 7" stroke-width="2"/></svg></button>
    </div>
    <div class="tabs"><button class="on">Model</button><button>Tasks</button></div>
    <div class="tree-box">
      <ul class="tree">
        <li><div class="node"><svg class="tw" viewBox="0 0 10 10"><path d="M1 3l4 4 4-4"/></svg><span class="label bold"><svg><use href="#i-doc"/></svg>Wing</span></div>
          <ul>
            <li><div class="node"><svg class="tw" viewBox="0 0 10 10"><path d="M1 3l4 4 4-4"/></svg><span class="label bold lilac"><svg><use href="#i-body"/></svg>Body</span></div>
              <ul>
                <li><div class="node"><svg class="tw dim" viewBox="0 0 10 10"><path d="M3 1l4 4-4 4"/></svg><span class="label dimtext"><svg><use href="#i-origin"/></svg>Origin</span></div></li>
                <li><div class="node"><i class="tw"></i><span class="label picked"><svg><use href="#i-base"/></svg>BaseFeature</span></div></li>
              </ul>
            </li>
            <li><div class="node"><i class="tw"></i><span class="label dimtext"><svg><use href="#i-solid"/></svg>Open CASCADE STEP translator 7.5 1</span></div></li>
            <li><div class="node"><svg class="tw" viewBox="0 0 10 10"><path d="M1 3l4 4 4-4"/></svg><span class="label violet"><svg><use href="#i-a"/></svg>Analysis</span></div>
              <ul>
                <li><div class="node"><i class="tw"></i><span class="label"><svg><use href="#i-solver"/></svg>SolverCcxTools</span></div></li>
                <li><div class="node"><svg class="tw" viewBox="0 0 10 10"><path d="M1 3l4 4 4-4"/></svg><span class="label dimtext"><svg><use href="#i-gmesh"/></svg>FEMMeshGmsh</span></div>
                  <ul>
                    <li><div class="node"><i class="tw"></i><span class="label"><svg><use href="#i-group"/></svg>root</span></div></li>
                    <li><div class="node"><i class="tw"></i><span class="label"><svg><use href="#i-group"/></svg>wetSurface</span></div></li>
                    <li><div class="node"><i class="tw"></i><span class="label"><svg><use href="#i-group"/></svg>lowerSurface</span></div></li>
                  </ul>
                </li>
              </ul>
            </li>
          </ul>
        </li>
      </ul>
    </div>
    <div class="props">
      <table>
        <colgroup><col class="col-pad"><col class="col-key"><col></colgroup>
        <thead><tr><th colspan="2" class="name">Property</th><th>Value</th></tr></thead>
        <tbody>
          <tr class="section"><th colspan="3">Base</th></tr>
          <tr class="odd"><td class="pad"></td><td class="key">Base Feature</td><td>Part__Feature (Open CASCADE STEP translator 7.5 1)</td></tr>
          <tr><td class="pad"></td><td class="key">Label</td><td>BaseFeature</td></tr>
        </tbody>
      </table>
    </div>
    <div class="dock-tabs"><i></i></div>
  </aside>

  <section class="mdi">
    <div class="view">
      <svg class="model" viewBox="422 151 1478 717">
        <defs>
          <linearGradient id="skin" gradientUnits="userSpaceOnUse" x1="1208" y1="419" x2="1144" y2="475"><stop offset="0" stop-color="#5cf05c"/><stop offset=".1" stop-color="#6cff6c"/><stop offset=".22" stop-color="#5aee5a"/><stop offset=".45" stop-color="#45d947"/><stop offset="1" stop-color="#3acc3b"/></linearGradient>
          <linearGradient id="nose" gradientUnits="userSpaceOnUse" x1="1340" y1="570" x2="1350" y2="561"><stop offset="0" stop-color="#262626"/><stop offset=".5" stop-color="#4c4c4c"/><stop offset="1" stop-color="#2a2a2a"/></linearGradient>
        </defs>
        <g stroke="#111" stroke-width="1.500" stroke-linejoin="round">
          <path d="M1203 398L1475 706 1503 737Q1514 747 1513 757L1510 764 1208 419z" fill="url(#nose)"/>
          <path d="M865 239L1046 446 1168 586 1332 685 1439 744 1475 760 1495 766Q1510 770 1511 764L1208 419 1028 341z" fill="url(#skin)"/>
          <path d="M865 239L944 263 1013 287 1087 318 1146 350 1185 379Q1199 391 1205 402 1210 411 1208 418 1206 423 1200 422.500 1188 422 1174 417L1135 399 1028 341z" fill="#c9c9c9"/>
        </g>
        <path d="M854 564L1078 428" stroke="#fff000" stroke-width="5" stroke-linecap="round"/>
        <text x="766" y="603" class="callout">lower Surface</text>
      </svg>
      <svg class="navcube" viewBox="0 36 480 444">
        <g fill="#9495b1" stroke="#101018" stroke-width="3" stroke-linejoin="round">
          <path d="M263 55l35 39h-69zM263 448l35-39h-69zM68 252l38-35v70zM460 252l-38-35v70z"/>
          <circle cx="436" cy="80" r="19"/>
          <path d="M208 76q-46 8-78 44l-8-5-5 42 40-9-9-8q26-28 64-43z"/>
          <path d="M320 76q46 8 78 44l8-5 5 42-40-9 9-8q-26-28-64-43z"/>
          <path d="M367 375l32-11 29 10v36l-30 11-31-11zM367 375l31 9 30-10M398 384v37"/>
          <path d="M196 143Q215 126 250 128L338 170 362 190 388 236 386 272 352 345 322 370 290 378 160 305 147 288 139 265 142 234z"/>
          <path d="M208 152L235 145 250 128M235 145L320 184 338 170M320 184L326 208 297 300 275 300 243 308 163 268 158 235 200 153M326 208L350 227 362 195M350 227L388 240M158 235L142 234M163 268L160 290 147 290M243 308L240 340M275 355L297 300M160 290L240 340 275 355 318 370" fill="none"/>
        </g>
        <g class="face"><text transform="translate(241 226) rotate(205)" dy=".35em" font-size="28">BOTTOM</text><text transform="translate(343 294) rotate(120)" dy=".35em" font-size="25">LEFT</text></g>
        <g fill="none" stroke-width="5"><path d="M146 290l127 64" stroke="#f00"/><path d="M350 227l-77 127" stroke="#0f0"/><path d="M273 354l38 46" stroke="#00f" stroke-width="4"/></g>
      </svg>
      <svg class="axes" viewBox="0 0 360 267">
        <path d="M254 160l-40-20" stroke="#8c1c1c" stroke-width="4"/><path d="M202 133l18 3-6 11-11-5z" fill="#8c1c1c"/>
        <path d="M254 160l24-42" stroke="#187c18" stroke-width="4"/><path d="M288 102l-3 22-14-7z" fill="#187c18" stroke="#187c18" stroke-width="4"/>
        <path d="M254 160l8 9" stroke="#1c1c8c" stroke-width="4"/><path d="M258 167h11v10h-11z" fill="#1c1c8c"/>
        <text x="208" y="127">X</text><text x="299" y="94">Y</text><text x="280" y="173">Z</text>
      </svg>
    </div>
    <div class="mdi-tabs"><i></i></div>
  </section>
</main>
</body>
</html>
```
FILE: styles.css
```css
* { box-sizing: border-box; }
html, body { height: 100%; }
body {
  margin: 0;
  display: flex;
  flex-direction: column;
  overflow: hidden;
  background: #efefef;
  color: #000;
  font: 11px/20px "Open Sans", "Noto Sans", sans-serif;
}
button { margin: 0; padding: 0; border: 0; background: none; font: inherit; color: inherit; }
h1, h2 { margin: 0; font: inherit; }
ul { margin: 0; padding: 0; list-style: none; }
svg { display: block; flex: none; }
.defs { position: absolute; width: 0; height: 0; }

.glyph-a { font: 400 31px "Liberation Serif", serif; fill: #f0d420; stroke: #5c4a00; stroke-width: 1px; text-anchor: middle; }
.glyph-s { font: 400 28px "Liberation Sans Narrow", "Liberation Sans", sans-serif; fill: #d01010; stroke: #d01010; stroke-width: 1px; }
.glyph-olver { font: 700 10px "Liberation Sans Narrow", "Liberation Sans", sans-serif; fill: #d01010; }
.glyph-t { font: 700 17px "Liberation Sans", sans-serif; fill: #c81010; text-anchor: middle; }
.glyph-1d { font: 700 13px "Liberation Sans", sans-serif; fill: #4c4c4c; text-anchor: middle; }
.glyph-d { font: 700 13px "Liberation Sans", sans-serif; fill: #5a5c5a; text-anchor: middle; }
.glyph-mesh { font: 700 18px "Liberation Serif", serif; fill: #e01010; stroke: #a00000; stroke-width: 1px; text-anchor: middle; }
.glyph-cs { font: 700 17px "Liberation Sans", sans-serif; fill: #999; stroke: #333; stroke-width: 1px; text-anchor: middle; }

.titlebar { display: flex; align-items: center; height: 29px; padding-left: 6px; background: #f2f2f2; color: #8b8b8b; flex: none; }
.app-icon { width: 16px; height: 16px; margin-right: 5px; }
.window-buttons { display: flex; margin-left: auto; }
.window-buttons button { width: 46px; height: 26px; display: grid; place-items: center; }
.window-buttons svg { width: 12px; height: 12px; fill: none; stroke: #8b8b8b; }

.menubar { display: flex; height: 21px; padding: 1px 0 0; background: #fff; flex: none; }
.menubar button { padding: 0 8px 0 9px; }
.menubar button:first-child { padding-left: 6px; }

.toolrow { display: flex; height: 34px; border-top: 1px solid #fbfbfb; border-bottom: 1px solid #b4b4b4; flex: none; }
.toolbar { display: flex; align-items: center; padding-right: 2px; border-right: 1px solid #b4b4b4; }
.toolbar.last { border-right: 0; }
.toolbar::before { content: ""; width: 3px; height: 27px; margin: 0 4px 0 2px; background: radial-gradient(circle, #b0b0b0 1px, transparent 2px) 0 0 / 3px 4px; }
.toolbar:first-child::before { margin: 0 2px; }
.tool { width: 31px; height: 30px; display: grid; place-items: center; border: 1px solid transparent; border-radius: 2px; }
.tool svg { width: 24px; height: 24px; }
.tool:disabled svg { filter: grayscale(1); opacity: .7; }
.tool.active { background: #cce8ff; border-color: #90c8f6; color: #5484c0; }
.tool.grey { color: #a9a9a9; }
.tool.red { color: #e02010; }
.tool.navy { color: #1c1cc8; }
.drop { width: 12px; height: 30px; display: grid; place-items: center; }
.drop::before { content: ""; border: 4px solid transparent; border-top-color: #222; border-bottom: 0; }
.drop.off::before { border-top-color: #6c6c6c; }
.sep { width: 1px; height: 24px; margin: 0 3px 0 2px; background: #c8c8c8; }
.workbench { display: flex; align-items: center; width: 145px; height: 22px; padding: 0 5px; border: 1px solid #ccc; border-radius: 2px; background: #fff; }
.workbench svg { width: 16px; height: 16px; }
.workbench select { flex: 1; height: 20px; padding: 0 2px; border: 0; background: none; appearance: none; font: inherit; color: #000; }
.workbench .chev { width: 9px; height: 9px; fill: none; stroke: #555; }

.workspace { flex: 1; display: flex; min-height: 0; }
.combo { display: flex; flex-direction: column; width: 418px; margin-right: 4px; padding-top: 1px; flex: none; }
.dock-title { display: flex; align-items: center; height: 19px; padding-left: 3px; border: 1px solid #b4b4b4; border-left: 0; background: #d9d9d9; }
.dock-title h2 { flex: 1; }
.dock-title button { width: 21px; height: 17px; display: grid; place-items: center; }
.dock-title svg { width: 10px; height: 10px; fill: none; stroke: #333; }
.tabs { display: flex; align-items: flex-end; height: 23px; }
.tabs button { width: 46px; height: 18px; line-height: 17px; border: 1px solid #dedede; border-width: 1px 1px 0 0; background: #f4f4f4; }
.tabs .on { width: 52px; height: 20px; padding-right: 5px; background: #fcfcfc; }
.tree-box { flex: 0 1 322px; margin: 1px 4px 0 0; padding-top: 1px; border: 1px solid #828790; background: #fff; overflow: hidden; }
.tree { width: 260px; }
.tree ul { padding-left: 20px; }
.node { display: flex; align-items: center; height: 20px; }
.tw { width: 10px; height: 10px; margin: 0 6px 0 4px; fill: none; stroke: #222; stroke-width: 2; flex: none; }
.tw.dim { stroke: #8a8a8a; stroke-width: 1; }
.label { flex: 1; display: flex; align-items: center; gap: 6px; height: 20px; padding-left: 3px; white-space: nowrap; }
.label svg { width: 16px; height: 16px; }
.bold { font-weight: 700; }
.lilac { background: #e6e6ff; }
.violet { background: #c8c8ff; }
.picked { background: #d9d9d9; border-radius: 2px; }
.dimtext { color: #808080; }

.props { flex: 1; margin: 7px 8px 0 2px; border: 1px solid #828790; background: #fff; min-height: 0; }
table { width: 100%; border-spacing: 0; table-layout: fixed; }
th, td { height: 20px; padding: 0 3px; font-weight: 400; text-align: left; white-space: nowrap; line-height: 19px; border-bottom: 1px solid #dadada; }
thead th { height: 23px; padding-left: 4px; border-bottom: 0; }
.col-pad { width: 20px; }
.col-key { width: 80px; }
.name { border-right: 1px solid #e4e4e4; }
.section th { background: #a0a0a0; color: #fff; font-weight: 700; }
.pad { border-bottom: 0; }
.key { background: #f0f0f0; border-right: 1px solid #dadada; }
.odd td { background: #f5f5f5; }
.odd .pad { background: #fff; }
.dock-tabs { height: 5px; padding: 2px 0 0 45px; background: linear-gradient(#efefef 2px, #dcdcdc 2px, #dcdcdc 3px, #f2f2f2 3px); }
.dock-tabs i { display: block; width: 47px; height: 3px; background: #fff; }

.mdi { flex: 1; display: flex; flex-direction: column; min-width: 0; }
.view { position: relative; flex: 1; min-height: 0; background: linear-gradient(#333366, #9898ab); overflow: hidden; }
.model { position: absolute; inset: 0; width: 100%; height: 100%; }
.navcube { position: absolute; top: 0; right: 0; width: 160px; height: 148px; }
.axes { position: absolute; right: 0; bottom: 0; width: 120px; height: 89px; }
.callout { font: 700 22px Lato, sans-serif; fill: #f2e416; }
.face { font-family: "Liberation Sans", sans-serif; font-weight: 700; fill: #34343f; text-anchor: middle; }
.axes text { font: 700 27px "Liberation Sans", sans-serif; text-anchor: middle; }
.mdi-tabs { height: 2px; padding-left: 113px; background: linear-gradient(#a8a8a8 1px, #e8e8e8 1px); flex: none; }
.mdi-tabs i { display: block; width: 111px; height: 2px; background: #fff; }
```
